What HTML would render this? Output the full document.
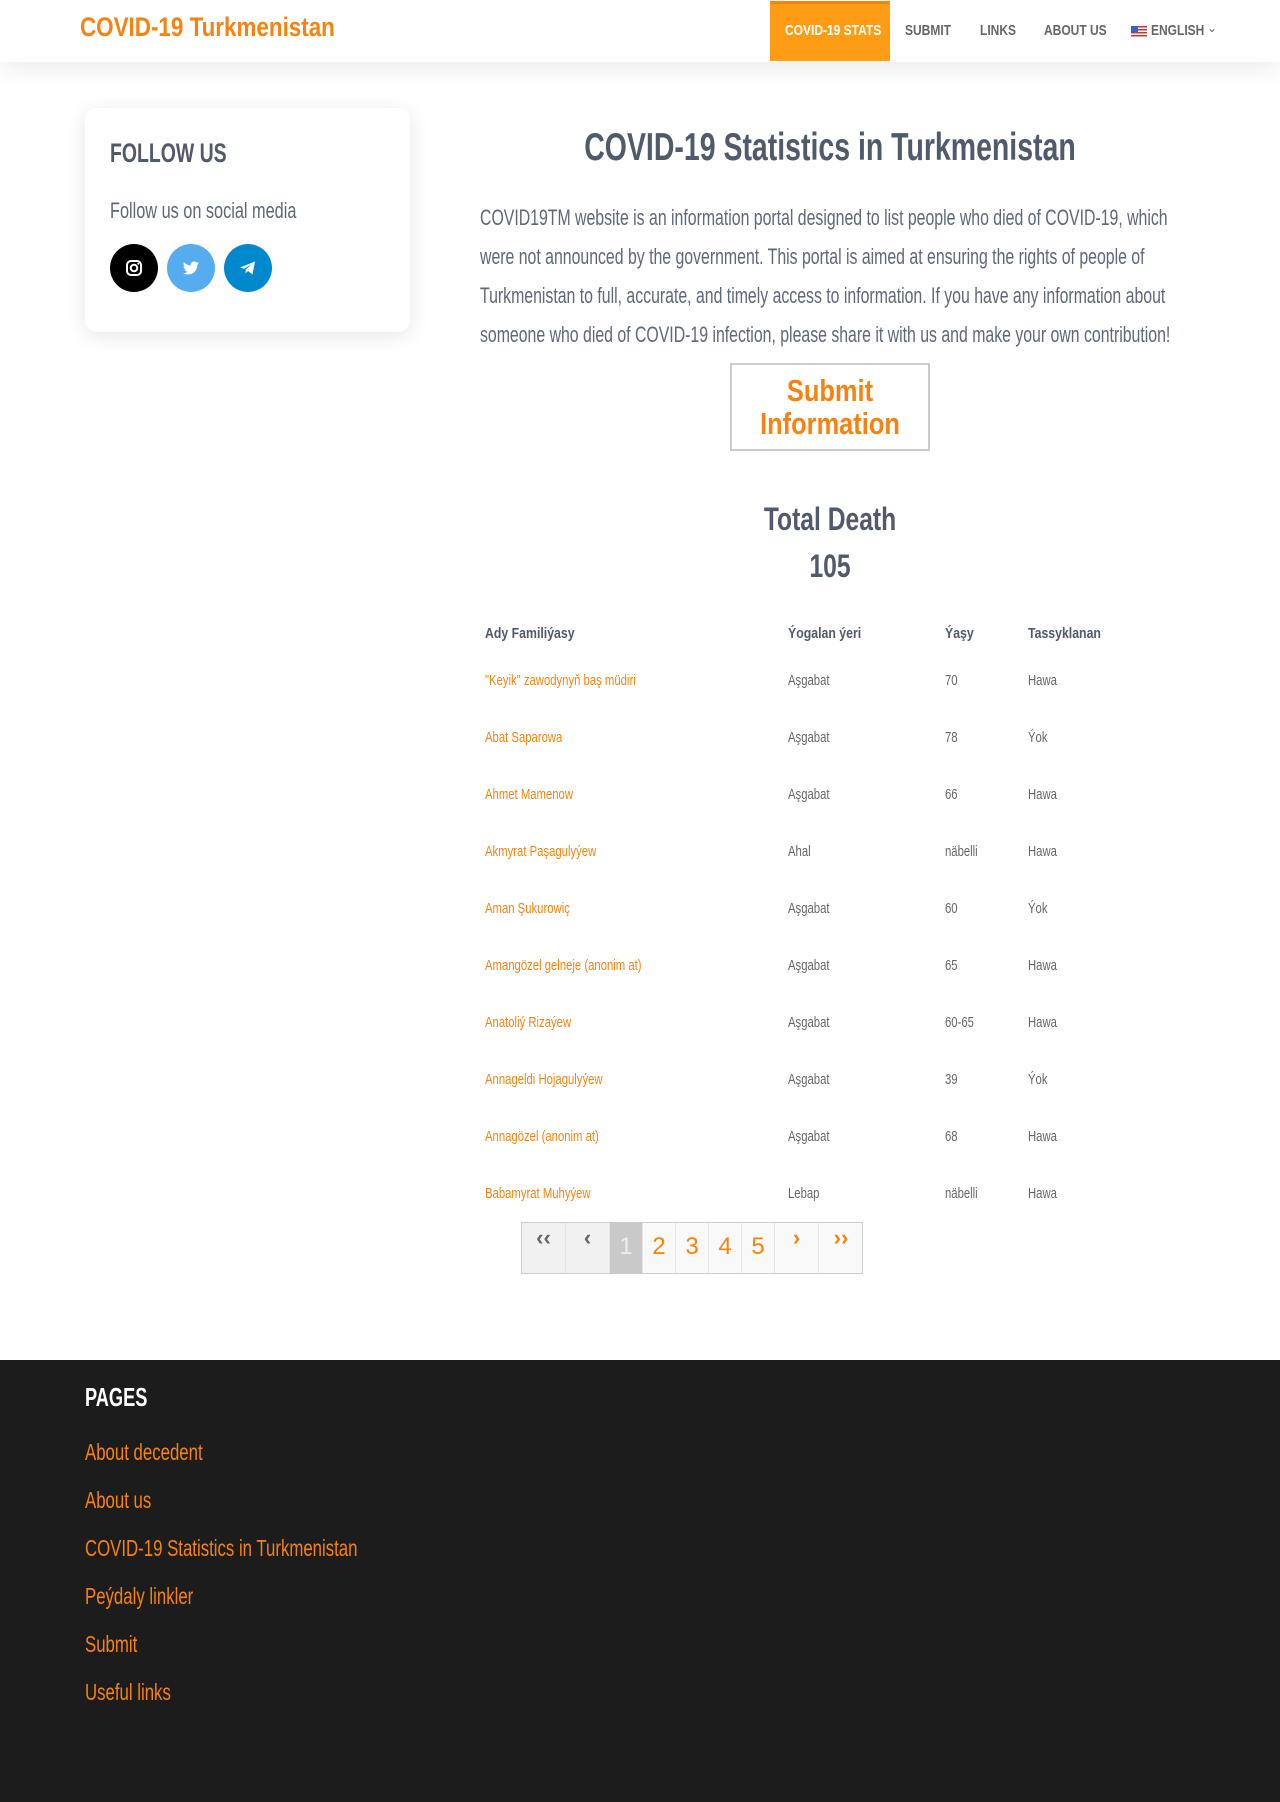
<!DOCTYPE html>
<html><head><meta charset="utf-8"><style>
*{box-sizing:border-box;margin:0;padding:0}
body{width:1280px;height:1802px;background:#fff;font-family:"Liberation Sans",sans-serif;color:#505a6b;position:relative;overflow:hidden}
.abs{position:absolute;white-space:nowrap;transform-origin:0 0}
header{position:absolute;left:0;top:0;width:1280px;height:62px;background:#fff;box-shadow:0 6px 24px rgba(0,0,0,.08)}
.logo{left:80px;top:12px;font-size:27px;font-weight:bold;color:#f7820f;transform:scaleX(.83)}
.nav{top:22px;font-size:15px;font-weight:bold;color:#666;transform:scaleX(.8)}
.active{left:770px;top:1px;width:120px;height:60px;background:#ff9c16;border-top:3px solid #f7820f}
.card{left:85px;top:108px;width:325px;height:224px;background:#fff;border-radius:12px;box-shadow:0 4px 20px rgba(0,0,0,.1)}
.ic{width:48px;height:48px;border-radius:50%;top:244px}
.para{left:480px;top:198px;width:975px;font-size:22px;line-height:39px;color:#5f6878;white-space:normal;transform:scaleX(.72)}
.btn{left:730px;top:363px;width:200px;height:88px;border:2px solid #ccc}
.td{font-size:14.5px;color:#666;transform:scaleX(.78)}
.th{font-size:15px;font-weight:bold;color:#505a6b;transform:scaleX(.82)}
.or{color:#f7820f}
.pg{top:1222px;height:52px;border:1px solid #ccc;background:#f9f9f9;left:521px;width:342px}
.c{position:absolute;top:0;height:50px;border-right:1px solid #e5e5e5;text-align:center;font-size:24px;color:#f7820f;padding-top:10px}
footer{position:absolute;left:0;top:1360px;width:1280px;height:442px;background:#1c1c1c}
.fl{left:85px;font-size:23px;color:#f7820f;transform:scaleX(.73)}
.row{position:relative;height:57px}
</style></head><body>
<header>
<div class="abs logo">COVID-19 Turkmenistan</div>
<div class="abs active"></div>
<div class="abs nav" style="left:785px;color:#fff">COVID-19 STATS</div>
<div class="abs nav" style="left:905px">SUBMIT</div>
<div class="abs nav" style="left:980px">LINKS</div>
<div class="abs nav" style="left:1044px">ABOUT US</div>
<div class="abs" style="left:1131px;top:26px;width:16px;height:11px;background:repeating-linear-gradient(#c33 0 1.5px,#fff 1.5px 3px)"><div style="width:7px;height:6px;background:#36c"></div></div>
<div class="abs nav" style="left:1151px">ENGLISH</div>
<div class="abs" style="left:1207px;top:21px;font-size:12px;color:#666">&#8964;</div>
</header>
<div class="abs card"></div>
<div class="abs" style="left:110px;top:138px;font-size:27px;font-weight:bold;transform:scaleX(.72)">FOLLOW US</div>
<div class="abs" style="left:110px;top:198px;font-size:22px;color:#5f6878;transform:scaleX(.74)">Follow us on social media</div>
<div class="abs ic" style="left:110px;background:#000"><svg width="48" height="48" viewBox="0 0 48 48"><rect x="17" y="17" width="14" height="14" rx="4" fill="none" stroke="#fff" stroke-width="2"/><circle cx="24" cy="24" r="3.3" fill="none" stroke="#fff" stroke-width="2"/><circle cx="28.3" cy="19.7" r="1" fill="#fff"/></svg></div>
<div class="abs ic" style="left:167px;background:#55acee"><svg width="48" height="48" viewBox="0 0 48 48"><path d="M32 19c-.6.3-1.2.4-1.9.5.7-.4 1.2-1 1.4-1.8-.6.4-1.3.6-2.1.8a3.3 3.3 0 0 0-5.6 3C21 21.4 18.6 20.1 17 18.1c-.9 1.5-.4 3.4 1 4.4-.5 0-1-.2-1.5-.4 0 1.6 1.1 2.9 2.6 3.2-.5.1-1 .2-1.5.1.4 1.3 1.6 2.3 3.1 2.3A6.6 6.6 0 0 1 16 29c1.5.9 3.2 1.5 5 1.5 6.1 0 9.5-5.1 9.3-9.7.7-.5 1.2-1.1 1.7-1.8z" fill="#fff"/></svg></div>
<div class="abs ic" style="left:224px;background:#0088cc"><svg width="48" height="48" viewBox="0 0 48 48"><path d="M16 23.5l15-6-2.5 13-4.5-3.5-2.5 2.3.3-3.8 6-5.5-7.5 4.7z" fill="#fff"/></svg></div>
<div class="abs" style="left:480px;width:700px;top:126px;text-align:center;font-size:39px;font-weight:bold;transform:scaleX(.73);transform-origin:350px 0">COVID-19 Statistics in Turkmenistan</div>
<div class="abs para">COVID19TM website is an information portal designed to list people who died of COVID-19, which were not announced by the government. This portal is aimed at ensuring the rights of people of Turkmenistan to full, accurate, and timely access to information. If you have any information about someone who died of COVID-19 infection, please share it with us and make your own contribution!</div>
<div class="abs btn"></div>
<div class="abs" style="left:730px;width:200px;top:374px;text-align:center;color:#f7820f;font-size:31px;font-weight:bold;line-height:33px;transform:scaleX(.82);transform-origin:100px 0">Submit<br>Information</div>
<div class="abs" style="left:480px;width:700px;top:496px;text-align:center;font-size:32px;font-weight:bold;line-height:47px;transform:scaleX(.77);transform-origin:350px 0">Total Death<br>105</div>
<div class="abs th" style="left:485px;top:625px">Ady Familiýasy</div>
<div class="abs th" style="left:788px;top:625px">Ýogalan ýeri</div>
<div class="abs th" style="left:945px;top:625px">Ýaşy</div>
<div class="abs th" style="left:1028px;top:625px">Tassyklanan</div>
<div class="abs" style="left:0;top:673px;width:1280px">
<div class="row"><span class="abs td or" style="left:485px">"Keyik" zawodynyň baş müdiri</span><span class="abs td" style="left:788px">Aşgabat</span><span class="abs td" style="left:945px">70</span><span class="abs td" style="left:1028px">Hawa</span></div>
<div class="row"><span class="abs td or" style="left:485px">Abat Saparowa</span><span class="abs td" style="left:788px">Aşgabat</span><span class="abs td" style="left:945px">78</span><span class="abs td" style="left:1028px">Ýok</span></div>
<div class="row"><span class="abs td or" style="left:485px">Ahmet Mamenow</span><span class="abs td" style="left:788px">Aşgabat</span><span class="abs td" style="left:945px">66</span><span class="abs td" style="left:1028px">Hawa</span></div>
<div class="row"><span class="abs td or" style="left:485px">Akmyrat Paşagulyýew</span><span class="abs td" style="left:788px">Ahal</span><span class="abs td" style="left:945px">näbelli</span><span class="abs td" style="left:1028px">Hawa</span></div>
<div class="row"><span class="abs td or" style="left:485px">Aman Şukurowiç</span><span class="abs td" style="left:788px">Aşgabat</span><span class="abs td" style="left:945px">60</span><span class="abs td" style="left:1028px">Ýok</span></div>
<div class="row"><span class="abs td or" style="left:485px">Amangözel gelneje (anonim at)</span><span class="abs td" style="left:788px">Aşgabat</span><span class="abs td" style="left:945px">65</span><span class="abs td" style="left:1028px">Hawa</span></div>
<div class="row"><span class="abs td or" style="left:485px">Anatoliý Rizaýew</span><span class="abs td" style="left:788px">Aşgabat</span><span class="abs td" style="left:945px">60-65</span><span class="abs td" style="left:1028px">Hawa</span></div>
<div class="row"><span class="abs td or" style="left:485px">Annageldi Hojagulyýew</span><span class="abs td" style="left:788px">Aşgabat</span><span class="abs td" style="left:945px">39</span><span class="abs td" style="left:1028px">Ýok</span></div>
<div class="row"><span class="abs td or" style="left:485px">Annagözel (anonim at)</span><span class="abs td" style="left:788px">Aşgabat</span><span class="abs td" style="left:945px">68</span><span class="abs td" style="left:1028px">Hawa</span></div>
<div class="row"><span class="abs td or" style="left:485px">Babamyrat Muhyýew</span><span class="abs td" style="left:788px">Lebap</span><span class="abs td" style="left:945px">näbelli</span><span class="abs td" style="left:1028px">Hawa</span></div>
</div>
<div class="abs pg">
<div class="c" style="left:0;width:44px;background:#f1f1f1;color:#666;font-size:22px;padding-top:2px;font-weight:bold">&lsaquo;&lsaquo;</div>
<div class="c" style="left:44px;width:44px;background:#f1f1f1;color:#666;font-size:22px;padding-top:2px;font-weight:bold">&lsaquo;</div>
<div class="c" style="left:88px;width:33px;background:#c9c9c9;color:#eee">1</div>
<div class="c" style="left:121px;width:33px">2</div>
<div class="c" style="left:154px;width:33px">3</div>
<div class="c" style="left:187px;width:33px">4</div>
<div class="c" style="left:220px;width:33px">5</div>
<div class="c" style="left:253px;width:44px;font-size:22px;padding-top:2px;font-weight:bold">&rsaquo;</div>
<div class="c" style="left:297px;width:44px;border:0;font-size:22px;padding-top:2px;font-weight:bold">&rsaquo;&rsaquo;</div>
</div>
<footer>
<div class="abs" style="left:85px;top:22px;font-size:26px;font-weight:bold;color:#fff;transform:scaleX(.7)">PAGES</div>
<div class="abs fl" style="top:79px">About decedent</div>
<div class="abs fl" style="top:127px">About us</div>
<div class="abs fl" style="top:175px">COVID-19 Statistics in Turkmenistan</div>
<div class="abs fl" style="top:223px">Peýdaly linkler</div>
<div class="abs fl" style="top:271px">Submit</div>
<div class="abs fl" style="top:319px">Useful links</div>
</footer>
</body></html>
